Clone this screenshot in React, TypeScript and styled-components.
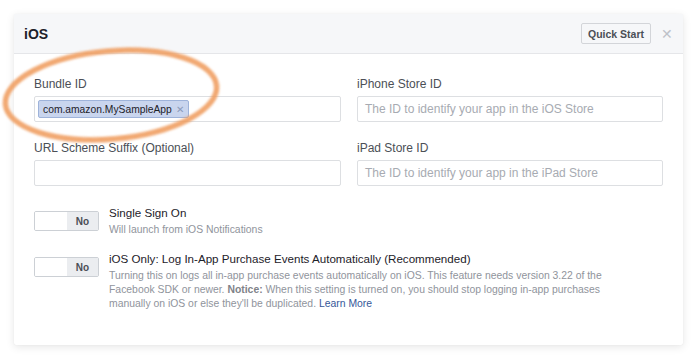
import React from 'react';
import styled, { createGlobalStyle } from 'styled-components';

const GlobalStyle = createGlobalStyle`
  html, body {
    margin: 0;
    padding: 0;
    background: #ffffff;
    font-family: "Liberation Sans", Arial, Helvetica, sans-serif;
  }
`;

const Page = styled.div`
  position: relative;
  width: 699px;
  height: 361px;
  padding: 14px 16px 16px 14px;
  box-sizing: border-box;
`;

const Card = styled.div`
  width: 669px;
  height: 331px;
  background: #fff;
  border-radius: 2px;
  box-shadow: 0 2px 8px rgba(0, 0, 0, 0.1), 0 0 1px rgba(0, 0, 0, 0.1);
  display: flex;
  flex-direction: column;
`;

const Header = styled.div`
  height: 40px;
  box-sizing: border-box;
  background: #f6f7f9;
  border-bottom: 1px solid #e5e6e9;
  display: flex;
  align-items: center;
  padding: 0 0 0 10px;
`;

const Title = styled.div`
  flex: 1;
  font-size: 14px;
  font-weight: bold;
  color: #1d2129;
`;

const QuickStart = styled.button`
  height: 21px;
  width: 70px;
  box-sizing: border-box;
  padding: 0;
  border: 1px solid #d3d5d9;
  border-radius: 2px;
  background: #f6f7f9;
  font-family: inherit;
  font-size: 10.5px;
  font-weight: bold;
  color: #4b4f56;
`;

const Close = styled.span`
  width: 32px;
  text-align: center;
  font-size: 14px;
  color: #bec2c9;
  line-height: 1;
`;

const Body = styled.div`
  padding: 22px 20px 0 20px;
  display: flex;
  flex-direction: column;
`;

const Grid = styled.div`
  display: grid;
  grid-template-columns: 307px 306px;
  column-gap: 16px;
  row-gap: 18px;
`;

const Field = styled.div`
  display: flex;
  flex-direction: column;
`;

const Label = styled.label`
  font-size: 12px;
  line-height: 16px;
  color: #4b4f56;
  margin-bottom: 4px;
`;

const InputBox = styled.div`
  height: 26px;
  box-sizing: border-box;
  border: 1px solid #dddfe2;
  border-radius: 2px;
  background: #fff;
  display: flex;
  align-items: center;
  padding: 0 3px;
`;

const Placeholder = styled.span`
  font-size: 12px;
  color: #a7abb2;
  padding-left: 4px;
`;

const Token = styled.span`
  height: 18px;
  box-sizing: border-box;
  display: inline-flex;
  align-items: center;
  padding: 0 4px;
  background: #c9d5ee;
  border: 1px solid #9eb3da;
  border-radius: 2px;
  font-size: 10.3px;
  color: #1d2129;
`;

const TokenX = styled.span`
  margin-left: 4px;
  font-size: 10px;
  color: #8b9bbb;
`;

const Toggles = styled.div`
  margin-top: 25px;
  display: flex;
  flex-direction: column;
  gap: 20px;
`;

const ToggleRow = styled.div`
  display: flex;
  align-items: flex-start;
  gap: 10px;
`;

const Switch = styled.div`
  width: 65px;
  height: 20px;
  box-sizing: border-box;
  border: 1px solid #ccd0d5;
  border-radius: 2px;
  display: flex;
  flex-shrink: 0;
  overflow: hidden;
`;

const SwitchOff = styled.div`
  flex: 1;
  background: #fff;
`;

const SwitchNo = styled.div`
  width: 31px;
  background: #ebedf0;
  display: flex;
  align-items: center;
  justify-content: center;
  font-size: 10px;
  font-weight: bold;
  color: #4b4f56;
`;

const ToggleText = styled.div`
  display: flex;
  flex-direction: column;
`;

const ToggleTitle = styled.div`
  font-size: 11.6px;
  line-height: 16px;
  color: #1d2129;
  margin-top: -6px;
`;

const ToggleSub = styled.div`
  font-size: 10.4px;
  line-height: 14px;
  color: #90949c;
  margin-top: 2px;
  white-space: nowrap;

  b {
    color: #7f8389;
  }

  a {
    color: #365899;
    text-decoration: none;
  }
`;

const Annotation = styled.svg`
  position: absolute;
  left: 0;
  top: 40px;
  pointer-events: none;
`;

export default function App() {
  return (
    <>
      <GlobalStyle />
      <Page>
        <Card>
          <Header>
            <Title>iOS</Title>
            <QuickStart>Quick Start</QuickStart>
            <Close>✕</Close>
          </Header>
          <Body>
            <Grid>
              <Field>
                <Label>Bundle ID</Label>
                <InputBox>
                  <Token>
                    com.amazon.MySampleApp<TokenX>✕</TokenX>
                  </Token>
                </InputBox>
              </Field>
              <Field>
                <Label>iPhone Store ID</Label>
                <InputBox>
                  <Placeholder>The ID to identify your app in the iOS Store</Placeholder>
                </InputBox>
              </Field>
              <Field>
                <Label>URL Scheme Suffix (Optional)</Label>
                <InputBox />
              </Field>
              <Field>
                <Label>iPad Store ID</Label>
                <InputBox>
                  <Placeholder>The ID to identify your app in the iPad Store</Placeholder>
                </InputBox>
              </Field>
            </Grid>
            <Toggles>
              <ToggleRow>
                <Switch>
                  <SwitchOff />
                  <SwitchNo>No</SwitchNo>
                </Switch>
                <ToggleText>
                  <ToggleTitle>Single Sign On</ToggleTitle>
                  <ToggleSub>Will launch from iOS Notifications</ToggleSub>
                </ToggleText>
              </ToggleRow>
              <ToggleRow>
                <Switch>
                  <SwitchOff />
                  <SwitchNo>No</SwitchNo>
                </Switch>
                <ToggleText>
                  <ToggleTitle>iOS Only: Log In-App Purchase Events Automatically (Recommended)</ToggleTitle>
                  <ToggleSub>
                    Turning this on logs all in-app purchase events automatically on iOS. This feature needs version 3.22 of the
                    <br />
                    Facebook SDK or newer. <b>Notice:</b> When this setting is turned on, you should stop logging in-app purchases
                    <br />
                    manually on iOS or else they'll be duplicated. <a href="#">Learn More</a>
                  </ToggleSub>
                </ToggleText>
              </ToggleRow>
            </Toggles>
          </Body>
        </Card>
        <Annotation width="240" height="115" viewBox="0 0 240 115">
          <defs>
            <filter id="soft" x="-10%" y="-10%" width="120%" height="120%">
              <feGaussianBlur stdDeviation="1.2" />
            </filter>
          </defs>
          <ellipse
            cx="111"
            cy="55"
            rx="106"
            ry="44"
            transform="rotate(-5 111 55)"
            fill="none"
            stroke="#ef9a5a"
            strokeWidth="5.5"
            opacity="0.85"
            filter="url(#soft)"
          />
        </Annotation>
      </Page>
    </>
  );
}
